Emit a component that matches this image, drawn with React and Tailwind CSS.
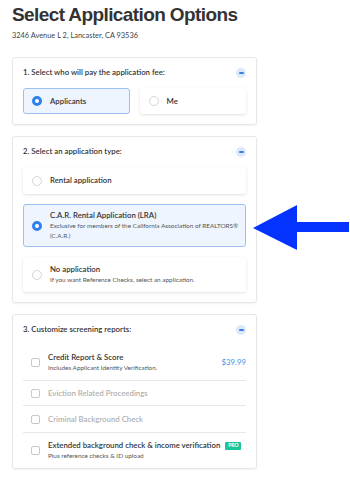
import React from 'react';

const Minus = () => (
  <span className="flex items-center justify-center w-[10px] h-[10px] rounded-full bg-[#dbe8fb]">
    <span className="block w-[5px] h-[1.5px] bg-[#3b7fe6] rounded-full" />
  </span>
);

const Radio = ({ checked }) =>
  checked ? (
    <span className="shrink-0 w-[10px] h-[10px] rounded-full border-[3px] border-[#2f80ed] bg-white" />
  ) : (
    <span className="shrink-0 w-[10px] h-[10px] rounded-full border border-[#d6d6d6] bg-white" />
  );

const Checkbox = () => (
  <span className="shrink-0 w-[9px] h-[9px] rounded-[2px] border border-[#c8c8c8] bg-white" />
);

const Section = ({ title, children, className = '' }) => (
  <div className={`border border-[#e7e7e7] rounded-[3px] shadow-[0_1px_2px_rgba(0,0,0,0.05)] px-[10px] ${className}`}>
    <div className="h-[30px] flex items-center justify-between">
      <p className="text-[7.8px] font-semibold text-[#333]">{title}</p>
      <Minus />
    </div>
    {children}
  </div>
);

const Option = ({ checked, label, desc, className = '' }) => (
  <div
    className={`flex items-center gap-[8px] pl-[8px] pr-[4px] rounded-[3px] border ${
      checked
        ? 'bg-[#eef5ff] border-[#9cc0f0]'
        : 'bg-white border-transparent shadow-[0_1px_3px_rgba(0,0,0,0.12)]'
    } ${className}`}
  >
    <Radio checked={checked} />
    <div className="flex flex-col">
      <span className="text-[7.8px] font-semibold text-[#333] leading-[11px]">{label}</span>
      {desc && <span className="text-[6.4px] text-[#555] leading-[10px]">{desc}</span>}
    </div>
  </div>
);

const Report = ({ title, desc, disabled, price, pro, className = '' }) => (
  <div className={`flex items-center gap-[8px] pl-[8px] ${className}`}>
    <Checkbox />
    <div className="flex flex-col flex-1">
      <span
        className={`text-[7.8px] font-semibold leading-[11px] flex items-center gap-[5px] ${
          disabled ? 'text-[#b0b0b0]' : 'text-[#333]'
        }`}
      >
        {title}
        {pro && (
          <span className="inline-flex items-center justify-center w-[16px] h-[8px] rounded-[1px] bg-[#1cc49b] text-white text-[5px] font-bold">
            PRO
          </span>
        )}
      </span>
      {desc && <span className="text-[6.4px] text-[#555] leading-[10px]">{desc}</span>}
    </div>
    {price && <span className="text-[7.8px] text-[#4a90e2]">{price}</span>}
  </div>
);

export default function App() {
  return (
    <div
      className="relative w-[350px] h-[477px] bg-white overflow-hidden"
      style={{ fontFamily: 'Lato, "Noto Sans", sans-serif' }}
    >
      <div className="pl-3 pt-[3px]">
        <h1
          className="text-[19px] leading-[24px] font-bold text-[#333] tracking-[-0.6px]"
          style={{ fontFamily: '"Liberation Sans", Arial, sans-serif' }}
        >
          Select Application Options
        </h1>
        <p className="mt-[4px] text-[7.4px] leading-[10px] text-[#444]">
          3246 Avenue L 2, Lancaster, CA 93536
        </p>
      </div>

      <div className="ml-3 mt-[16px] w-[245px] flex flex-col gap-[11px]">
        <Section title="1. Select who will pay the application fee:" className="pb-[10px]">
          <div className="grid grid-cols-2 gap-[10px]">
            <Option checked label="Applicants" className="h-[26px]" />
            <Option label="Me" className="h-[26px]" />
          </div>
        </Section>

        <Section title="2. Select an application type:" className="pb-[10px]">
          <div className="flex flex-col gap-[10px]">
            <Option label="Rental application" className="h-[27px]" />
            <Option
              checked
              label="C.A.R. Rental Application (LRA)"
              desc="Exclusive for members of the California Association of REALTORS® (C.A.R.)"
              className="h-[43px]"
            />
            <Option
              label="No application"
              desc="If you want Reference Checks, select an application."
              className="h-[35px]"
            />
          </div>
        </Section>

        <Section title="3. Customize screening reports:">
          <div className="flex flex-col">
            <Report
              title="Credit Report & Score"
              desc="Includes Applicant Identity Verification."
              price="$39.99"
              className="h-[36px] border-b border-[#e8e8e8]"
            />
            <Report
              title="Eviction Related Proceedings"
              disabled
              className="h-[25px] border-b border-[#e8e8e8]"
            />
            <Report
              title="Criminal Background Check"
              disabled
              className="h-[27px] border-b border-[#e8e8e8]"
            />
            <Report
              title="Extended background check & income verification"
              desc="Plus reference checks & ID upload"
              pro
              className="h-[35px]"
            />
          </div>
        </Section>
      </div>

      <svg
        className="absolute left-[252px] top-[204px]"
        width="98"
        height="48"
        viewBox="0 0 98 48"
      >
        <polygon points="1,24 45,1 45,18 97,18 97,28 45,28 45,46" fill="#0433ff" />
      </svg>
    </div>
  );
}
